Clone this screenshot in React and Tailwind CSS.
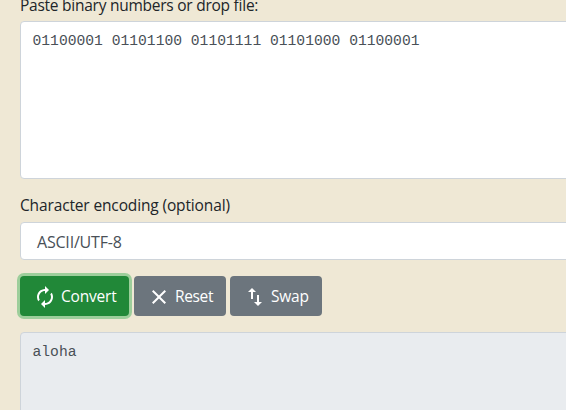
import { MdAutorenew, MdClear, MdSwapVert } from "react-icons/md";

const sans = "font-['Open_Sans','Noto_Sans',sans-serif]";
const mono = "font-['Liberation_Mono',monospace]";

function Label({ children, className }) {
  return <label className={`block h-6 text-[15.5px] leading-6 whitespace-nowrap text-[#212529] ${className}`}>{children}</label>;
}

function Button({ icon: Icon, label, className, textClass }) {
  return (
    <button className={`flex h-10 shrink-0 items-center gap-1 rounded pl-[13px] text-[15.5px] leading-6 text-white ${className}`}>
      <Icon size={24} className="mt-0.5 shrink-0" />
      <span className={`whitespace-nowrap ${textClass}`}>{label}</span>
    </button>
  );
}

export default function App() {
  return (
    <div className={`h-[410px] w-[566px] overflow-hidden bg-[#efe8d5] pl-5 ${sans}`}>
      <Label className="-mt-[7px] tracking-[-0.25px]">Paste binary numbers or drop file:</Label>
      <div className={`mt-1 h-[158px] w-[620px] rounded border border-[#ced4da] bg-white px-[11.5px] py-[7px] text-[14.67px] leading-6 text-[#495057] ${mono}`}>
        01100001 01101100 01101111 01101000 01100001
      </div>
      <Label className="mt-[14px] tracking-[-0.14px]">Character encoding (optional)</Label>
      <div className="mt-[5px] flex h-[38px] w-[620px] items-center rounded border border-[#ced4da] bg-white px-4 text-[16px] text-[#495057]">
        <span className="mt-px tracking-[-0.2px]">ASCII/UTF-8</span>
      </div>
      <div className="mt-4 flex gap-1">
        <Button icon={MdAutorenew} label="Convert" className="mr-px w-[109px] bg-[#218838] ring-3 ring-[#9dce9b]" textClass="tracking-[-0.2px]" />
        <Button icon={MdClear} label="Reset" className="w-[92px] bg-[#6c757d]" textClass="tracking-[-0.35px]" />
        <Button icon={MdSwapVert} label="Swap" className="w-[92px] bg-[#6c757d]" textClass="tracking-[-0.2px]" />
      </div>
      <div className={`mt-4 h-[158px] w-[620px] rounded border border-[#ced4da] bg-[#e9ecef] px-[11.5px] py-[7px] text-[14.67px] leading-6 text-[#495057] ${mono}`}>
        aloha
      </div>
    </div>
  );
}
